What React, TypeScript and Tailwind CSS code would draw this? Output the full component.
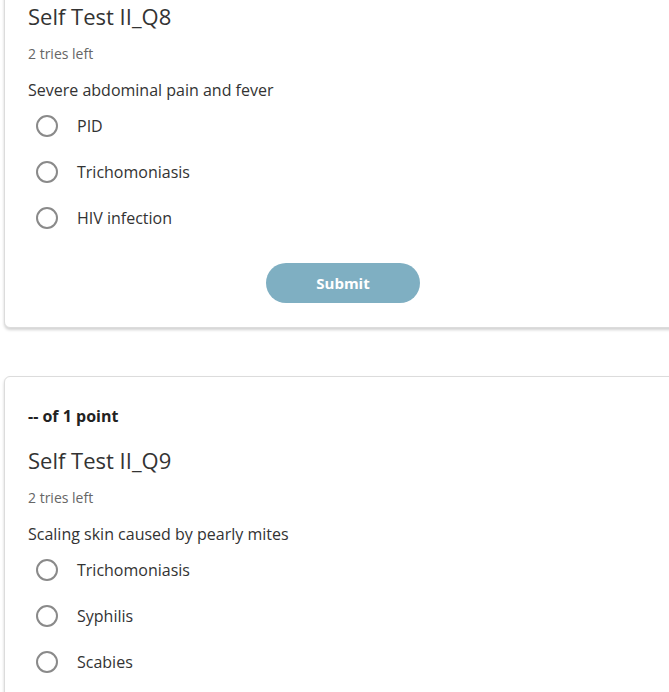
const questions = [
  {
    id: "q8",
    title: "Self Test II_Q8",
    prompt: "Severe abdominal pain and fever",
    options: ["PID", "Trichomoniasis", "HIV infection"],
  },
  {
    id: "q9",
    title: "Self Test II_Q9",
    prompt: "Scaling skin caused by pearly mites",
    options: ["Trichomoniasis", "Syphilis", "Scabies"],
  },
];

function Radio({ label }: { label: string }) {
  return (
    <label className="flex h-[46px] items-center cursor-pointer">
      <span className="ml-[8px] h-[22px] w-[22px] rounded-full border-2 border-[#8a8a8a] bg-white" />
      <span className="ml-[19px] text-[16px] text-[#333]">{label}</span>
    </label>
  );
}

function QuestionCard({ q }: { q: (typeof questions)[number] }) {
  return (
    <section className="w-[720px] rounded-[6px] border border-[#dcdcdc] bg-white pl-[23px] pt-[27px] pb-[24px] shadow-[0_2px_3px_rgba(0,0,0,0.18)]">
      <p className="text-[16px] leading-[24px] font-bold text-[#222]">-- of 1 point</p>
      <h2 className="mt-[17px] text-[22px] leading-[30px] text-[#333]">{q.title}</h2>
      <p className="mt-[13px] text-[14px] leading-[20px] text-[#666]">2 tries left</p>
      <p className="mt-[14px] text-[16px] leading-[24px] text-[#333]">{q.prompt}</p>
      <div className="mt-[1px] flex flex-col">
        {q.options.map((o) => (
          <Radio key={o} label={o} />
        ))}
      </div>
      <div className="mt-[22px] flex w-[630px] justify-center">
        <button className="h-[40px] w-[154px] rounded-full bg-[#7fafc2] text-[15px] font-bold text-white">
          Submit
        </button>
      </div>
    </section>
  );
}

export default function App() {
  return (
    <div
      className="h-[692px] w-[669px] overflow-hidden bg-white"
      style={{ fontFamily: '"Open Sans", "Noto Sans", sans-serif' }}
    >
      <div className="-mt-[68px] flex flex-col gap-[48px] pl-[4px]">
        {questions.map((q) => (
          <QuestionCard key={q.id} q={q} />
        ))}
      </div>
    </div>
  );
}
